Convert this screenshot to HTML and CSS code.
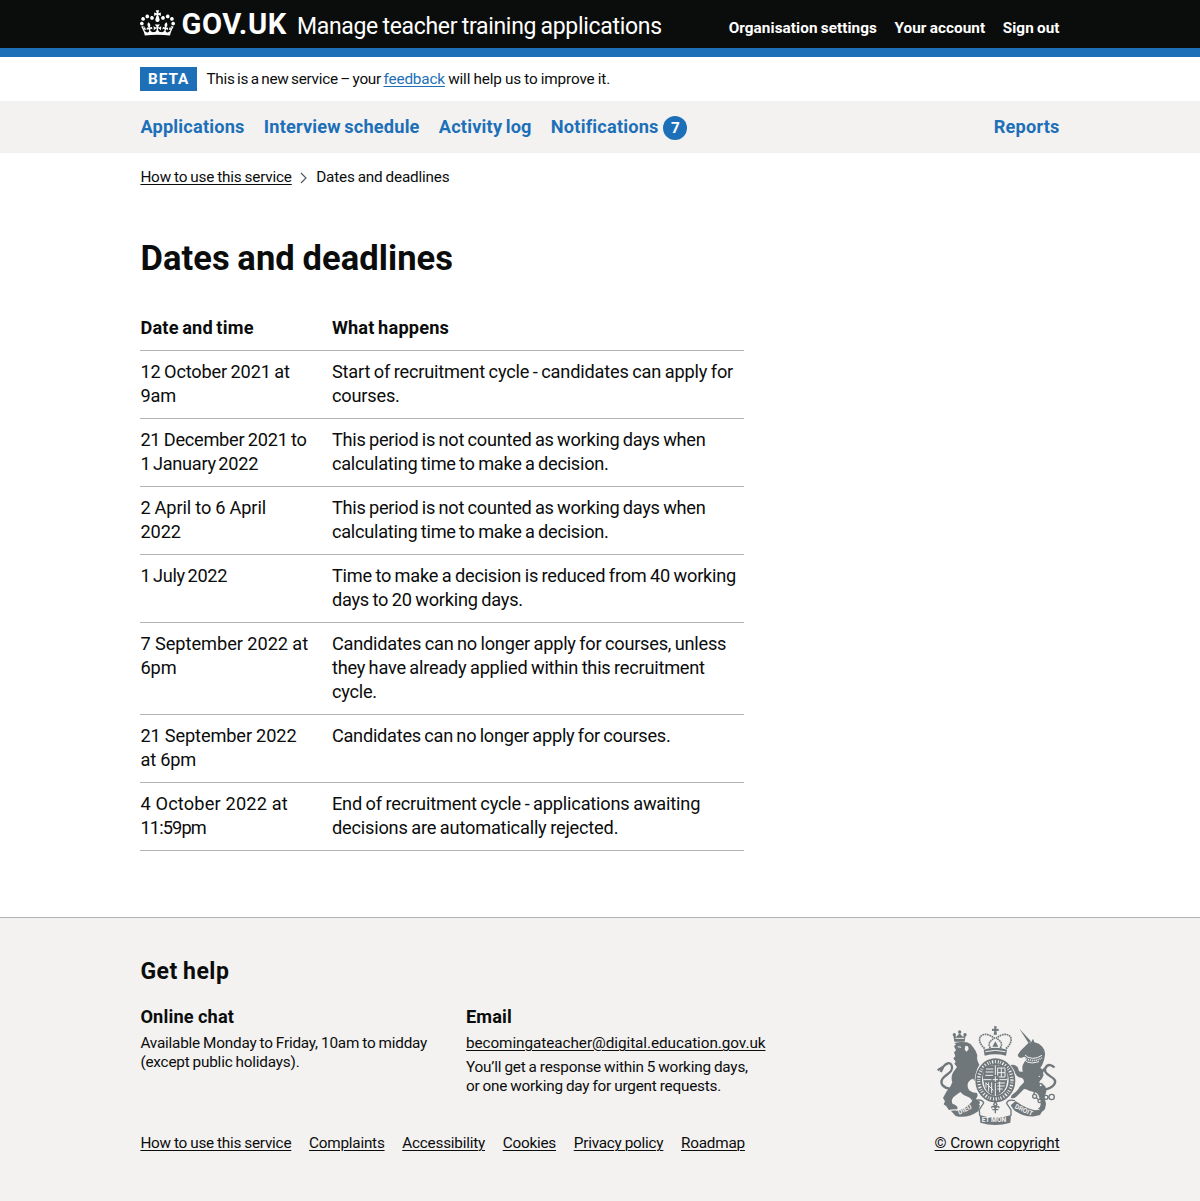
FILE: index.html
```html
<!DOCTYPE html>
<html lang="en">
<head>
<meta charset="utf-8">
<title>Dates and deadlines - Manage teacher training applications - GOV.UK</title>
<link rel="stylesheet" href="styles.css">
</head>
<body>
<header class="header">
  <div class="container header-row">
    <a class="logo" href="#">
      <svg class="crown" viewBox="0 0 132 97" aria-hidden="true"><path fill="currentColor" fill-rule="evenodd" d="M25 30.2c3.5 1.5 7.7-.2 9.1-3.7 1.5-3.6-.2-7.8-3.9-9.2-3.6-1.4-7.6.3-9.1 3.9-1.4 3.5.3 7.5 3.9 9zM9 39.5c3.6 1.5 7.8-.2 9.2-3.7 1.5-3.6-.2-7.8-3.9-9.1-3.6-1.5-7.6.2-9.1 3.8-1.4 3.5.3 7.5 3.8 9zM4.4 57.2c3.5 1.5 7.7-.2 9.1-3.8 1.5-3.6-.2-7.7-3.9-9.1-3.5-1.5-7.6.3-9.1 3.8-1.4 3.5.3 7.6 3.9 9.1zm38.3-21.4c3.5 1.5 7.7-.2 9.1-3.8 1.5-3.6-.2-7.7-3.9-9.1-3.6-1.5-7.6.3-9.1 3.8-1.3 3.6.4 7.7 3.9 9.1zm64.4-5.6c-3.6 1.5-7.8-.2-9.1-3.7-1.5-3.6.2-7.8 3.8-9.2 3.6-1.4 7.7.3 9.2 3.9 1.3 3.5-.4 7.5-3.9 9zm15.9 9.3c-3.6 1.5-7.7-.2-9.1-3.7-1.5-3.6.2-7.8 3.7-9.1 3.6-1.5 7.7.2 9.2 3.8 1.5 3.5-.3 7.5-3.8 9zm4.7 17.7c-3.6 1.5-7.8-.2-9.2-3.8-1.5-3.6.2-7.7 3.9-9.1 3.6-1.5 7.7.3 9.2 3.8 1.3 3.5-.4 7.6-3.9 9.1zM89.3 35.8c-3.6 1.5-7.8-.2-9.2-3.8-1.4-3.6.2-7.7 3.9-9.1 3.6-1.5 7.7.3 9.2 3.8 1.4 3.6-.3 7.7-3.9 9.1zM69.7 17.7l8.9 4.7V9.3l-8.9 2.8c-.2-.3-.5-.6-.9-.9L72.4 0H59.6l3.5 11.2c-.3.3-.6.5-.9.9l-8.8-2.8v13.1l8.8-4.7c.3.3.6.7.9.9l-5 15.4v.1c-.2.8-.4 1.6-.4 2.4 0 4.1 3.1 7.5 7 8.1h.2c.3 0 .7.1 1 .1.4 0 .7 0 1-.1h.2c4-.6 7.1-4.1 7.1-8.1 0-.8-.1-1.7-.4-2.4V34l-5.1-15.4c.4-.2.7-.6 1-.9zM66 92.8c16.9 0 32.8 1.1 47.1 3.2 4-16.9 8.9-26.7 14-33.5l-9.6-3.4c1 4.9 1.1 7.2 0 10.2-1.5-1.4-3-4.3-4.2-8.7L108.6 76c2.8-2 5-3.2 7.5-3.3-4.4 9.4-10 11.9-13.6 11.2-4.3-.8-6.3-4.6-5.6-7.9 1-4.7 5.7-5.9 8-.5 4.3-8.7-3-11.4-7.6-8.8 7.1-7.2 7.9-13.5 2.1-21.1-8 6.1-8.1 12.3-4.5 20.8-4.7-5.4-12.1-2.5-9.5 6.2 3.4-5.2 7.9-2 7.2 3.1-.6 4.3-6.4 7.8-13.5 7.2-10.3-.9-10.9-8-11.2-13.8 2.5-.5 7.1 1.8 11 7.3L80.2 60c-4.1 4.4-8 5.3-12.3 5.4 1.4-4.4 8-11.6 8-11.6H55.5s6.4 7.2 7.9 11.6c-4.2-.1-8-1-12.3-5.4l1.4 16.4c3.9-5.5 8.5-7.7 10.9-7.3-.3 5.8-.9 12.8-11.1 13.8-7.2.6-12.9-2.9-13.5-7.2-.7-5 3.8-8.3 7.1-3.1 2.7-8.7-4.6-11.6-9.4-6.2 3.7-8.5 3.6-14.7-4.6-20.8-5.8 7.6-5 13.9 2.2 21.1-4.7-2.6-11.9.1-7.7 8.8 2.3-5.5 7.1-4.2 8.1.5.7 3.3-1.3 7.1-5.7 7.9-3.5.7-9-1.8-13.5-11.2 2.5.1 4.7 1.3 7.5 3.3l-4.7-15.4c-1.2 4.4-2.7 7.2-4.3 8.7-1.1-3-.9-5.3 0-10.2l-9.5 3.4c5 6.9 9.9 16.7 14 33.5 14.8-2.1 30.8-3.2 47.7-3.2z"/></svg>
      <span class="logo-text">GOV.UK</span>
    </a>
    <a class="service" href="#">Manage teacher training applications</a>
    <nav class="account">
      <a href="#">Organisation settings</a>
      <a href="#">Your account</a>
      <a href="#">Sign out</a>
    </nav>
  </div>
</header>
<div class="phase"><div class="container phase-row">
  <strong class="tag">BETA</strong>
  <span class="phase-text"><span class="phase-intro">This is a new service – your </span><a href="#">feedback</a> will help us to improve it.</span>
</div></div>
<nav class="primary"><div class="container primary-row">
  <a href="#">Applications</a>
  <a href="#">Interview schedule</a>
  <a href="#">Activity log</a>
  <a class="notify" href="#">Notifications<span class="badge">7</span></a>
  <a class="reports" href="#">Reports</a>
</div></nav>
<main class="container main">
  <div class="crumbs small">
    <a href="#">How to use this service</a>
    <svg class="chevron" viewBox="0 0 7 12" aria-hidden="true"><path d="M1 1l5 5-5 5" fill="none" stroke="#505a5f" stroke-width="1.2"/></svg>
    <span>Dates and deadlines</span>
  </div>
  <h1>Dates and deadlines</h1>
  <table>
    <thead><tr><th class="when">Date and time</th><th>What happens</th></tr></thead>
    <tbody>
      <tr><td>12 October 2021 at<br>9am</td><td>Start of recruitment cycle - candidates can apply for<br>courses.</td></tr>
      <tr><td class="snug">21 December 2021 to<br><span class="tight">1 January 2022</span></td><td class="snug">This period is not counted as working days when<br>calculating time to make a decision.</td></tr>
      <tr><td class="april">2 April to 6 April<br>2022</td><td class="snug">This period is not counted as working days when<br>calculating time to make a decision.</td></tr>
      <tr><td class="tight">1 July 2022</td><td class="even">Time to make a decision is reduced from 40 working<br>days to 20 working days.</td></tr>
      <tr><td class="loose">7 September 2022 at<br>6pm</td><td class="even">Candidates can no longer apply for courses, unless<br>they have already applied within this recruitment<br>cycle.</td></tr>
      <tr><td class="april">21 September 2022<br>at 6pm</td><td class="snug">Candidates can no longer apply for courses.</td></tr>
      <tr><td class="looser">4 October 2022 at<br><span class="time">11:59pm</span></td><td>End of recruitment cycle - applications awaiting<br>decisions are automatically rejected.</td></tr>
    </tbody>
  </table>
</main>
<footer class="footer">
  <div class="container">
    <h2>Get help</h2>
    <div class="footer-row">
      <div class="footer-main">
        <div class="help small">
          <section>
            <h3>Online chat</h3>
            <p>Available Monday to Friday, 10am to midday<br>(except public holidays).</p>
          </section>
          <section>
            <h3>Email</h3>
            <p><a class="email" href="#">becomingateacher@digital.education.gov.uk</a></p>
            <p>You’ll get a response within 5 working days,<br>or one working day for urgent requests.</p>
          </section>
        </div>
        <nav class="links small">
          <a href="#">How to use this service</a>
          <a href="#">Complaints</a>
          <a href="#">Accessibility</a>
          <a href="#">Cookies</a>
          <a href="#">Privacy policy</a>
          <a href="#">Roadmap</a>
        </nav>
      </div>
      <div class="copyright small">
        <svg class="crest" viewBox="33 30 366 300" aria-hidden="true">
          <!-- lion -->
          <g class="ink">
            <path d="M88 80l-3-20 9 5 10-10 9 10 9-5-3 20z"/>
            <circle cx="104" cy="51" r="5"/><circle cx="88" cy="59" r="5"/><circle cx="120" cy="59" r="5"/>
            <path d="M88 84q18-5 38-2 12 3 18 14 10 12 13 25-3 14 6 28l-7 14 2 12q-10 12-19 14-3 8-10 14-4 14 5 24 10 7 22 7l2 8-5 10 12 9q-1 11-12 10-13 0-12-12-2-10-13-14-14-4-22-14-13 9-21 16-8 10-2 20 12 3 15 11-1 10-13 9l-14-3-7-10-8-6 4-9-6-10 10-19q14-15 18-28-6-15 3-31l11-15-8-10 4-6-7-10 6-6-4-12 6-6-6-12 6-6z"/>
            <path d="M134 178l22-4 10 8-2 11-15 5-5-7-16 7z"/>
          </g>
          <path class="tail" d="M76 222C55 218 44 207 52 192C60 178 88 172 80 151C76 141 64 143 55 155L38 166M55 155l-8 16"/>
          <path class="paper" d="M91 70h27M98 95l10 2"/>
          <path d="M121 92l8 2 2 9-6 7-6-6z" fill="#f3f2f1"/>
          <!-- unicorn -->
          <path class="ink" d="M283 41l35 38-7 6z"/>
          <path class="ink" d="M310 84l9-3 5-10 4 11q15 3 24 13 9 10 8 24l-3 17q-5 16-11 23l12 8q-6 6-2 13-4 14-16 22 13 2 20 11 6 8 3 20l-5 14 5 19-3 16q-11 13-25 11-5-7 4-12 9-5 8-15l-5-21q-3-12-15-14-13-1-24-8-7-3-11 4l-18 18q-9 8-17 3 1-8 10-13 12-8 17-20l13-13q0-12-9-14-13-1-18-15 0-7-9-14-13 5-18-3 5-7 19-7 11 0 17 9l3 11 11 2q-2-12 0-20l10-18-4-8-12 4q-8-1-9-9l8-12z"/>
          <path class="paper" d="M300 120l9 7 14 3 14-2 14-7M298 134l9 7 15 3 20-4"/>
          <path class="paper beads" d="M299 127l9 7 15 3 14-2 14-6"/>
          <path class="tail" d="M358 224C386 218 398 202 385 190C374 182 354 174 362 158C369 145 383 150 388 158M362 158l-8 8"/>
          <path class="line" d="M351 178q-13 29-25 60l16 18 22-12"/>
          <g fill="#f3f2f1" stroke="#6f777b" stroke-width="4">
            <circle cx="343" cy="184" r="4"/><circle cx="347" cy="211" r="5"/><circle cx="329" cy="244" r="6"/><circle cx="344" cy="258" r="5"/><circle cx="363" cy="247" r="6"/><circle cx="380" cy="246" r="8"/>
          </g>
          <!-- crown -->
          <path class="ink" d="M207 34h8l-1 8 7-1v7l-7-1 2 12h-10l2-12-7 1v-7l7 1z"/>
          <path class="arches" d="M179 101c-29-27-12-48 10-42q12 4 20 11M243 101c29-27 12-48-10-42q-12 4-20 11M196 99c-8-13-2-21 13-30M226 99c8-13 2-21-13-30"/>
          <path class="ink" d="M176 104q35-11 70 0l-3 18q-32-8-64 0zM202 95l9-16 9 16z"/>
          <path class="paper" d="M181 110q30-8 60 0"/>
          <!-- garter and shield -->
          <ellipse cx="211" cy="196" rx="62" ry="68" fill="#f3f2f1"/>
          <ellipse cx="211" cy="196" rx="50" ry="56" fill="none" stroke="#6f777b" stroke-width="20"/>
          <ellipse cx="211" cy="196" rx="50" ry="56" fill="none" stroke="#f3f2f1" stroke-width="10" stroke-dasharray="3 4 2 5 4 5 3 6"/>
          <circle cx="211" cy="187" r="37" fill="#6f777b"/>
          <path class="ink" d="M176 154h70v46q-2 34-35 44-33-10-35-44z"/>
          <path class="paper" d="M211 151v92M175 194h72M183 162h22M182 171h23M181 181h24M218 159h22v27h-22zM229 159v27M218 173h22M182 203l23 23M183 203v15M191 202v27M200 202v32M217 204h23M217 213h22M217 222h16M224 200v32"/>
          <circle class="line" cx="211" cy="192" r="10"/>
          <!-- scrolls -->
          <path class="ink" d="M78 288q38 3 65-31l22 14-5 18q-34 23-68 14zM257 271l15-13q33 26 69 29l16-7-12 20-17 4q-36 2-62-20zM164 300q47 17 94 0l-2 23q-46 14-90 0z"/>
          <path class="paper" d="M76 285q38 3 65-31M273 254q33 27 70 30"/>
          <path class="line" d="M152 256q21-4 24 8l-13 20 1 18M270 257q-23-5-25 8l13 20v17"/>
          <path class="line" d="M211 274l-5-5 5-10 5 10zM201 280c-3-8 6-8 9 0M221 280c3-8-6-8-9 0M202 284h18M211 280v15"/>
          <g class="motto">
            <text x="103" y="299" transform="rotate(-26 103 299)">DIEU</text>
            <text x="170" y="322">ET MON</text>
            <text x="268" y="279" transform="rotate(25 268 279)">DROIT</text>
          </g>
        </svg>
        <a href="#">© Crown copyright</a>
      </div>
    </div>
  </div>
</footer>
</body>
</html>
```
FILE: styles.css
```css
* { box-sizing: border-box; }
body { margin: 0; background: #fff; color: #0b0c0c; font: 18.2px/24px Roboto, Arial, sans-serif; letter-spacing: -.19px; word-spacing: -.7px; white-space: nowrap; }
a { color: inherit; text-underline-offset: 2px; text-decoration-thickness: 1px; }
h1, h2, h3, p { margin: 0; }
.container { width: 919.2px; margin: 0 auto; }
.small { font-size: 15.3px; line-height: 19.2px; letter-spacing: -.2px; word-spacing: -.5px; }

.header { height: 57.4px; background: #0b0c0c; border-bottom: 9px solid #1d70b8; color: #fff; }
.header a { text-decoration: none; }
.header-row { display: flex; height: 48px; }
.logo { display: flex; width: 156.5px; padding-top: 10px; }
.crown { width: 35px; height: 26px; margin-right: 6px; }
.logo-text { font-size: 29.2px; font-weight: 700; line-height: 28px; letter-spacing: .6px; }
.service { padding-top: 12.5px; font-size: 23px; line-height: 28px; letter-spacing: -.3px; word-spacing: -1px; }
.account { display: flex; gap: 17.5px; margin-left: auto; padding-top: 18.4px; font-size: 15.3px; font-weight: 700; line-height: 20px; letter-spacing: .07px; word-spacing: -.7px; }

.phase { height: 43.2px; padding-top: 9.6px; }
.phase-row { display: flex; align-items: center; gap: 9.6px; }
.tag { width: 56.5px; height: 24px; background: #1d70b8; color: #fff; font-size: 15.3px; line-height: 24px; letter-spacing: 1px; text-align: center; }
.phase-text { font-size: 15.3px; line-height: 24px; letter-spacing: -.15px; word-spacing: -.4px; }
.phase-intro { letter-spacing: -.27px; word-spacing: -1px; }
.phase-text a { color: #1d70b8; }

.primary { height: 52.4px; background: #f3f2f1; color: #1d70b8; font-weight: 700; letter-spacing: .18px; word-spacing: -1.3px; }
.primary-row { display: flex; gap: 19.2px; padding-top: 14.4px; }
.primary a { text-decoration: none; }
.notify { display: flex; }
.badge { width: 24px; height: 24px; margin: 1px 0 0 4.7px; border-radius: 50%; background: #1d70b8; color: #fff; font-size: 15.3px; line-height: 24px; text-align: center; letter-spacing: 0; }
.reports { margin-left: auto; }

.main { height: 764.5px; padding-top: 15px; }
.crumbs { display: flex; align-items: center; }
.chevron { width: 7px; height: 12px; margin: 0 9px 0 8.5px; }
h1 { margin-top: 46.8px; font-size: 34.5px; line-height: 48px; letter-spacing: .08px; word-spacing: -1px; }
table { width: 603.3px; margin-top: 24.6px; border-collapse: separate; border-spacing: 0; table-layout: fixed; }
th, td { padding: 9.5px 0; border-bottom: 1px solid #b1b4b6; text-align: left; vertical-align: top; line-height: 24px; }
tbody tr { height: 68px; }
th { letter-spacing: .18px; word-spacing: -1.2px; }
.when { width: 191.5px; }
.even { letter-spacing: -.23px; word-spacing: -.75px; }
.snug { letter-spacing: -.26px; word-spacing: -.85px; }
.tight { letter-spacing: -.29px; word-spacing: -1.6px; }
.loose { letter-spacing: -.02px; word-spacing: -.2px; }
.april { letter-spacing: -.11px; word-spacing: -.3px; }
.looser { letter-spacing: .15px; word-spacing: .1px; }
.time { letter-spacing: -.85px; }

.footer { height: 283.5px; padding-top: 38.5px; background: #f3f2f1; border-top: 1px solid #b1b4b6; }
h2 { font-size: 23px; line-height: 29px; letter-spacing: .5px; word-spacing: -1px; }
.footer-row { display: flex; justify-content: space-between; align-items: flex-end; margin-top: 19px; }
.help { display: grid; grid-template-columns: 325.5px 325.5px; height: 129.3px; align-content: start; }
h3 { font-size: 18.2px; line-height: 24px; letter-spacing: .16px; margin-bottom: 5px; }
.help p { margin-bottom: 4.8px; }
.help a.email { letter-spacing: -.06px; }
.links { display: flex; gap: 17.7px; letter-spacing: -.22px; }
.copyright { display: flex; flex-direction: column; align-items: center; width: 125px; letter-spacing: -.1px; word-spacing: 0; }
.crest { width: 122px; height: 100px; margin-bottom: 9px; }
.ink { fill: #6f777b; }
.line, .tail, .arches { fill: none; stroke: #6f777b; stroke-width: 4; }
.tail { stroke-width: 7; }
.arches { stroke-width: 5; stroke-dasharray: 5 2; }
.paper { fill: none; stroke: #f3f2f1; stroke-width: 3; }
.beads { stroke-dasharray: 3 3; stroke-width: 5; }
.motto { fill: #f3f2f1; font: 700 20px Roboto, Arial, sans-serif; letter-spacing: 0; word-spacing: 0; }
```
